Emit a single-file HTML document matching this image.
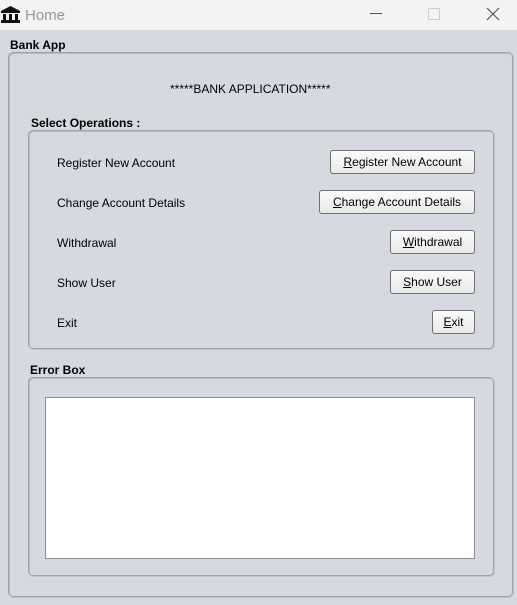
<!DOCTYPE html>
<html><head><style>
body{margin:0;width:517px;height:605px;background:#d6d9e0;font-family:"Liberation Sans",sans-serif;font-size:12px;color:#000;position:relative;overflow:hidden}
.a{position:absolute}
.title{left:0;top:0;width:517px;height:30px;background:#f3f3f3}
.box{position:absolute;border:1px solid #a0a3a8;border-radius:5px;box-shadow:1px 1px 0 #b8bbc0 inset, 1px 1px 0 #c2c5ca}
.bold{font-weight:bold}
.btn{position:absolute;border:1px solid #707070;border-radius:3px;background:linear-gradient(#fbfbfb,#e9e9eb);text-align:center;line-height:23px;box-sizing:border-box;height:24px}
.lbl{position:absolute;left:57px}
</style></head><body>
<div class="a title"></div>
<svg class="a" style="left:1px;top:6px" width="19" height="17" viewBox="0 0 19 17"><path d="M9.5 0L0 5h19z" fill="#111"/><rect x="0" y="5" width="19" height="2" fill="#111"/><rect x="2" y="8" width="3" height="6" fill="#111"/><rect x="8" y="8" width="3" height="6" fill="#111"/><rect x="14" y="8" width="3" height="6" fill="#111"/><rect x="0" y="14" width="19" height="3" fill="#111"/></svg>
<div class="a" style="left:25px;top:7px;font-size:15px;color:#999">Home</div>
<div class="a" style="left:370px;top:13px;width:12px;height:1px;background:#555"></div>
<div class="a" style="left:428px;top:8px;width:10px;height:10px;border:1px solid #ccc;border-radius:1px"></div>
<svg class="a" style="left:486px;top:7px" width="14" height="14"><path d="M1 1L13 13M13 1L1 13" stroke="#555" stroke-width="1.2"/></svg>
<div class="a bold" style="left:10px;top:38px">Bank App</div>
<div class="box" style="left:8px;top:52px;width:503px;height:543px"></div>
<div class="a" style="left:170px;top:82px">*****BANK APPLICATION*****</div>
<div class="a bold" style="left:31px;top:116px">Select Operations :</div>
<div class="box" style="left:28px;top:130px;width:464px;height:217px"></div>
<div class="lbl" style="top:156px">Register New Account</div>
<div class="lbl" style="top:196px">Change Account Details</div>
<div class="lbl" style="top:236px">Withdrawal</div>
<div class="lbl" style="top:276px">Show User</div>
<div class="lbl" style="top:316px">Exit</div>
<div class="btn" style="left:330px;top:150px;width:145px"><u>R</u>egister New Account</div>
<div class="btn" style="left:319px;top:190px;width:156px"><u>C</u>hange Account Details</div>
<div class="btn" style="left:390px;top:230px;width:85px"><u>W</u>ithdrawal</div>
<div class="btn" style="left:390px;top:270px;width:85px"><u>S</u>how User</div>
<div class="btn" style="left:432px;top:310px;width:43px"><u>E</u>xit</div>
<div class="a bold" style="left:30px;top:363px">Error Box</div>
<div class="box" style="left:28px;top:377px;width:464px;height:197px"></div>
<div class="a" style="left:45px;top:397px;width:428px;height:160px;background:#fff;border:1px solid #8a8d92"></div>
</body></html>
